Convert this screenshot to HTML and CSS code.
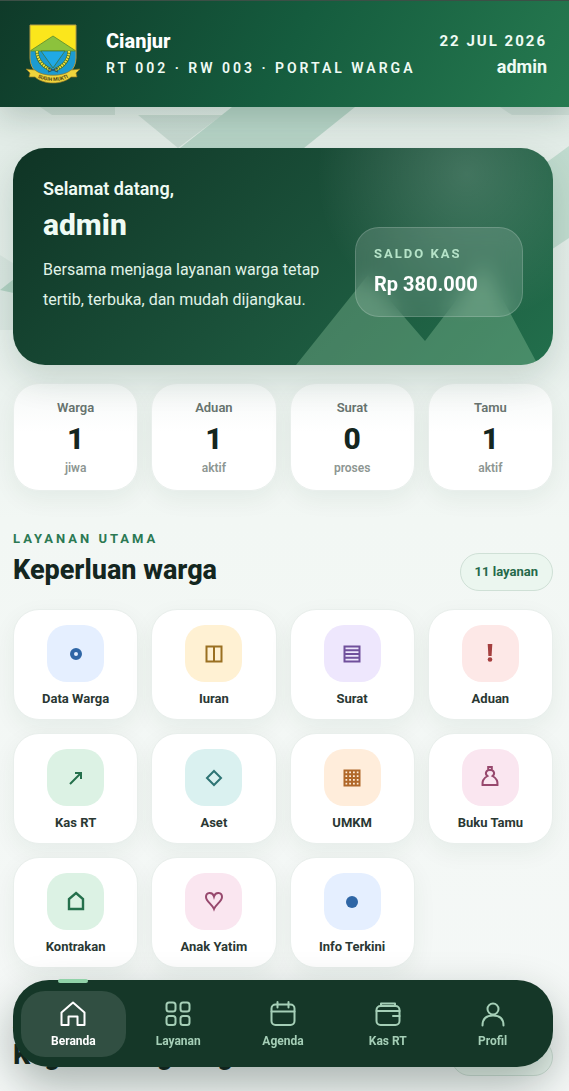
FILE: index.html
```html
<!DOCTYPE html>
<html lang="id">
<head>
    <meta charset="UTF-8">
    <meta name="viewport" content="width=device-width, initial-scale=1">
    <title>Portal Warga - Cianjur</title>
    <link rel="stylesheet" href="styles.css">
</head>
<body>

<svg class="backdrop" viewBox="0 0 569 400" preserveAspectRatio="none" aria-hidden="true">
    <path d="M138 115H222L178 148Z" fill="#0f5a3a" opacity=".12"/>
    <path d="M0 290L232 107H355L100 312Z" fill="#0f7a4a" opacity=".2"/>
    <path d="M569 146L400 270V350L569 238Z" fill="#0f7a4a" opacity=".16"/>
    <path d="M0 255L40 280V330H0Z" fill="#0f5a3a" opacity=".05"/>
    <path d="M40 107H115V115H52Z" fill="#0f5a3a" opacity=".1"/>
    <path d="M500 107H569V115H512Z" fill="#0f5a3a" opacity=".08"/>
</svg>

<header class="topbar">
    <svg class="logo" viewBox="0 0 56 60" role="img" aria-label="Lambang Cianjur">
        <path d="M5 1H51V34C51 46 41 54 28 57C15 54 5 46 5 34Z" fill="#1c9bd0"/>
        <path d="M5 1H51V27H5Z" fill="#fbe61c"/>
        <path d="M28 12L51 27H5Z" fill="#8cc23c" stroke="#5d8a2c" stroke-width=".8"/>
        <path d="M16 27L28 43L40 27Z" fill="#20a9e6"/>
        <path d="M16 27H40L28 44Z" fill="none" stroke="#46702b" stroke-width=".7"/>
        <path d="M12 27C12 35 17 42 26 46M44 27C44 35 39 42 30 46" fill="none" stroke="#3f6b2b" stroke-width="3.6"/>
        <path d="M12 27C12 35 17 42 26 46M44 27C44 35 39 42 30 46" fill="none" stroke="#f3e23a" stroke-width="2.4" stroke-dasharray="1.8 .8"/>
        <path d="M23 48L33 44M23 44L33 48" stroke="#24506a" stroke-width="1.2"/>
        <path d="M5 1H51V34C51 46 41 54 28 57C15 54 5 46 5 34Z" fill="none" stroke="#b49b45"/>
        <path d="M1 45L10 46C17 53 39 53 46 46L55 45L51 49L52 53L46 53C37 61 19 61 10 53L4 53L5 49Z" fill="#f0d43c" stroke="#8d7425" stroke-width=".7"/>
        <path id="pita" d="M9 51C18 59 38 59 47 51" fill="none"/>
        <text class="logo-text"><textPath href="#pita" startOffset="50%" text-anchor="middle">SUGIH MUKTI</textPath></text>
    </svg>
    <div class="brand">
        <strong>Cianjur</strong>
        <span>RT 002 · RW 003 · PORTAL WARGA</span>
    </div>
    <div class="session">
        <span>22 JUL 2026</span>
        <strong>admin</strong>
    </div>
</header>

<main class="page">
    <section class="hero">
        <svg class="hero-hills" viewBox="0 0 242 101" aria-hidden="true">
            <path d="M0 101L72 11L129 77L188 0L242 101Z" fill="#8ec49f" opacity=".36"/>
        </svg>
        <div class="hero-text">
            <p class="greeting">Selamat datang,</p>
            <h1>admin</h1>
            <p class="intro">Bersama menjaga layanan warga tetap tertib, terbuka, dan mudah dijangkau.</p>
        </div>
        <div class="balance">
            <span>SALDO KAS</span>
            <strong>Rp 380.000</strong>
        </div>
    </section>

    <section class="stats">
        <div class="stat"><span>Warga</span><strong>1</strong><small>jiwa</small></div>
        <div class="stat"><span>Aduan</span><strong>1</strong><small>aktif</small></div>
        <div class="stat"><span>Surat</span><strong>0</strong><small>proses</small></div>
        <div class="stat"><span>Tamu</span><strong>1</strong><small>aktif</small></div>
    </section>

    <section class="section">
        <div class="section-head">
            <div>
                <p class="eyebrow">LAYANAN UTAMA</p>
                <h2>Keperluan warga</h2>
            </div>
            <span class="pill">11 layanan</span>
        </div>

        <div class="services">
            <a class="service" href="#data-warga">
                <span class="tile blue"><svg viewBox="0 0 24 24"><circle cx="12" cy="12" r="4" stroke-width="4"/></svg></span>
                Data Warga
            </a>
            <a class="service" href="#iuran">
                <span class="tile yellow"><svg viewBox="0 0 24 24"><path d="M4.500 4.500H19.500V19.500H4.500ZM12 4.500V19.500"/></svg></span>
                Iuran
            </a>
            <a class="service" href="#surat">
                <span class="tile purple"><svg viewBox="0 0 24 24"><path d="M4.500 4.500H19.500V19.500H4.500ZM4.500 8.200H19.500M4.500 12H19.500M4.500 15.800H19.500"/></svg></span>
                Surat
            </a>
            <a class="service" href="#aduan">
                <span class="tile red"><svg viewBox="0 0 24 24"><path class="solid" d="M9.700 2H14.300L13.600 14H10.400Z"/><circle class="solid" cx="12" cy="17.500" r="2.300"/></svg></span>
                Aduan
            </a>
            <a class="service" href="#kas">
                <span class="tile green"><svg viewBox="0 0 24 24"><path d="M6 18L17 7M11 7H17V13"/></svg></span>
                Kas RT
            </a>
            <a class="service" href="#aset">
                <span class="tile teal"><svg viewBox="0 0 24 24"><path d="M12 5L19 12L12 19L5 12Z"/></svg></span>
                Aset
            </a>
            <a class="service" href="#umkm">
                <span class="tile orange"><svg viewBox="0 0 24 24"><path d="M4.500 4.500H19.500V19.500H4.500ZM8.200 4.500V19.500M12 4.500V19.500M15.800 4.500V19.500M4.500 8.200H19.500M4.500 12H19.500M4.500 15.800H19.500"/></svg></span>
                UMKM
            </a>
            <a class="service" href="#buku-tamu">
                <span class="tile pink"><svg viewBox="0 0 24 24"><path d="M10.200 4V1H13.800V4M9.500 10C6.500 7.500 8 4 12 4C16 4 17.500 7.500 14.500 10C18 12 20 15 19.500 19H4.500C4 15 6 12 9.500 10Z"/></svg></span>
                Buku Tamu
            </a>
            <a class="service" href="#kontrakan">
                <span class="tile green"><svg viewBox="0 0 24 24"><path d="M12 3L19 9V19H5V9Z" stroke-width="2.400"/></svg></span>
                Kontrakan
            </a>
            <a class="service" href="#anak-yatim">
                <span class="tile pink"><svg viewBox="0 0 24 24"><path d="M12 19C10 14 4 11.500 4 7C4 2 10.500 1.500 12 6.500C13.500 1.500 20 2 20 7C20 11.500 14 14 12 19Z"/></svg></span>
                Anak Yatim
            </a>
            <a class="service" href="#info">
                <span class="tile blue"><svg viewBox="0 0 24 24"><circle class="solid" cx="12" cy="12" r="6"/></svg></span>
                Info Terkini
            </a>
        </div>
    </section>

    <section class="section">
        <div class="section-head">
            <div>
                <p class="eyebrow">AGENDA</p>
                <h2>Kegiatan lingkungan</h2>
            </div>
            <a class="pill" href="#agenda">Lihat semua</a>
        </div>
    </section>
</main>

<nav class="bottom-nav">
    <a class="active" href="#beranda">
        <svg viewBox="0 0 26 26"><path d="M1.500 11.500L13 1.500L24.500 11.500V24H17.500V15.500H8.500V24H1.500Z"/></svg>
        Beranda
    </a>
    <a href="#layanan">
        <svg viewBox="0 0 26 26"><rect x="1.500" y="1.500" width="9" height="9" rx="2.500"/><rect x="15.500" y="1.500" width="9" height="9" rx="2.500"/><rect x="1.500" y="15" width="9" height="9" rx="2.500"/><rect x="15.500" y="15" width="9" height="9" rx="2.500"/></svg>
        Layanan
    </a>
    <a href="#agenda">
        <svg viewBox="0 0 26 26"><rect x="1.500" y="3.500" width="23" height="20.500" rx="4"/><path d="M1.500 10.500H24.500M7.500 1V6.500M18.500 1V6.500"/></svg>
        Agenda
    </a>
    <a href="#kas">
        <svg viewBox="0 0 26 26"><rect x="1.500" y="5" width="23" height="19" rx="4"/><path d="M6 4.500V2.500H20V4.500M1.500 10H24.500M24.500 15H18"/></svg>
        Kas RT
    </a>
    <a href="#profil">
        <svg viewBox="0 0 26 26"><circle cx="13" cy="8" r="5.500"/><path d="M2.500 24.500C2.500 18 6.500 14.500 13 14.500C19.500 14.500 23.500 18 23.500 24.500"/></svg>
        Profil
    </a>
</nav>

</body>
</html>
```
FILE: styles.css
```css
* {
    box-sizing: border-box;
}

body {
    margin: 0;
    min-height: 100vh;
    font-family: Roboto, sans-serif;
    color: #14261f;
    background: linear-gradient(180deg, #dfeae4 0, #e5eeea 280px, #f2f7f4 520px, #f5f8f7 100%);
    position: relative;
}

h1, h2, p {
    margin: 0;
}

a {
    color: inherit;
    text-decoration: none;
}

.backdrop {
    position: absolute;
    top: 0;
    left: 0;
    width: 100%;
    height: 400px;
    z-index: -1;
}

/* header */
.topbar {
    position: sticky;
    top: 0;
    z-index: 5;
    display: flex;
    align-items: center;
    padding: 23px 22px 23px 25px;
    border-top: 1px solid #3c4f46;
    background: linear-gradient(120deg, #0f3a29 0%, #155c3e 50%, #267a50 100%);
    box-shadow: 0 10px 30px rgba(15, 50, 35, 0.2);
    color: #effbf4;
}

.logo {
    width: 56px;
    height: 60px;
    margin-right: 25px;
}

.logo-text {
    font-size: 5px;
    font-weight: 700;
    fill: #4e4415;
}

.brand, .session {
    display: flex;
    flex-direction: column;
    gap: 2px;
    white-space: nowrap;
}

.brand strong {
    font-size: 20px;
    line-height: 26px;
    font-weight: 800;
    color: white;
}

.brand span {
    font-size: 14px;
    line-height: 24px;
    font-weight: 600;
    letter-spacing: 3px;
}

.session {
    margin-left: auto;
    gap: 0;
    text-align: right;
}

.session span {
    font-size: 15px;
    line-height: 26px;
    font-weight: 700;
    letter-spacing: 2px;
}

.session strong {
    font-size: 18px;
    line-height: 26px;
}

/* content */
.page {
    padding: 41px 16px 0 13px;
}

.hero {
    position: relative;
    overflow: hidden;
    display: flex;
    justify-content: space-between;
    align-items: flex-end;
    gap: 20px;
    padding: 29px 30px 48px;
    border-radius: 32px;
    background:
        radial-gradient(circle at 84% 12%, rgba(255, 255, 255, 0.17), rgba(255, 255, 255, 0) 150px),
        linear-gradient(135deg, #0f3425 0%, #1a5039 50%, #226f4c 100%);
    box-shadow: 0 14px 34px rgba(15, 60, 40, 0.16);
    color: #effbf4;
}

.hero-hills {
    position: absolute;
    right: 15px;
    bottom: 0;
    width: 242px;
    height: 101px;
}

.hero-text {
    flex: 1;
}

.greeting {
    font-size: 18px;
    line-height: 24px;
    font-weight: 600;
}

.hero h1 {
    margin: 6px 0 12px;
    font-size: 30px;
    line-height: 36px;
    font-weight: 800;
}

.intro {
    padding-bottom: 2px;
    font-size: 16px;
    line-height: 30px;
    color: #e0f3e8;
}

.balance {
    position: relative;
    display: flex;
    flex-direction: column;
    gap: 6px;
    width: 168px;
    height: 90px;
    padding: 16px 18px;
    border: 1px solid rgba(255, 255, 255, 0.17);
    border-radius: 24px;
    background: rgba(255, 255, 255, 0.14);
    backdrop-filter: blur(10px);
}

.balance span {
    font-size: 13px;
    line-height: 20px;
    font-weight: 700;
    letter-spacing: 2px;
    color: #b5e3c8;
}

.balance strong {
    font-size: 20px;
    line-height: 28px;
    color: white;
}

.stats, .services {
    display: grid;
    grid-template-columns: repeat(4, 1fr);
    gap: 13px;
}

.stats {
    margin-top: 18px;
}

.stat, .service {
    display: flex;
    flex-direction: column;
    align-items: center;
    border: 1px solid #e9efec;
    border-radius: 26px;
    background: white;
    box-shadow: 0 8px 24px rgba(20, 60, 42, 0.06);
}

.stat {
    padding: 14px 8px;
    background: linear-gradient(180deg, #f5f8f7, #ffffff 45%);
}

.stat span {
    font-size: 13px;
    line-height: 20px;
    font-weight: 600;
    color: #67736e;
}

.stat strong {
    font-size: 30px;
    line-height: 42px;
    font-weight: 800;
}

.stat small {
    font-size: 12px;
    line-height: 16px;
    font-weight: 600;
    color: #8d9692;
}

.section {
    margin-top: 38px;
}

.section-head {
    display: flex;
    justify-content: space-between;
    align-items: flex-end;
    margin-bottom: 18px;
}

.eyebrow {
    font-size: 13px;
    line-height: 20px;
    font-weight: 700;
    letter-spacing: 3px;
    color: #2b7953;
}

.section-head h2 {
    font-size: 27px;
    line-height: 42px;
    font-weight: 800;
}

.pill {
    padding: 8px 14px;
    border: 1px solid #cfe0d6;
    border-radius: 19px;
    background: #ebf6ef;
    font-size: 13px;
    line-height: 20px;
    font-weight: 700;
    color: #25694a;
}

.services {
    margin-bottom: 46px;
}

.service {
    gap: 7px;
    padding: 15px 4px 10px;
    font-size: 13px;
    line-height: 20px;
    font-weight: 700;
    color: #2a3833;
}

.tile {
    display: grid;
    place-items: center;
    width: 57px;
    height: 57px;
    border-radius: 20px;
}

.tile svg {
    width: 24px;
    height: 24px;
    fill: none;
    stroke: currentColor;
    stroke-width: 2;
}

.tile .solid {
    fill: currentColor;
    stroke: none;
}

.blue { background: #e5efff; color: #2f66a6; }
.yellow { background: #fff1d3; color: #9a7022; }
.purple { background: #eee7fd; color: #70509c; }
.red { background: #fde8e7; color: #a53f3f; }
.green { background: #dcf2e4; color: #25704c; }
.teal { background: #daf1f0; color: #2e7474; }
.orange { background: #ffeddb; color: #b0682a; }
.pink { background: #fae6f0; color: #97486d; }

/* bottom navigation */
.bottom-nav {
    position: fixed;
    left: 13px;
    right: 16px;
    bottom: 24px;
    z-index: 10;
    display: grid;
    grid-template-columns: repeat(5, 1fr);
    padding: 11px 8px 10px;
    border-radius: 36px;
    background: #153728;
    box-shadow: 0 18px 44px rgba(10, 35, 25, 0.32);
}

.bottom-nav a {
    position: relative;
    display: flex;
    flex-direction: column;
    align-items: center;
    gap: 5px;
    padding: 10px 0 7px;
    border-radius: 24px;
    font-size: 12px;
    line-height: 18px;
    font-weight: 700;
    color: #a5cfb7;
}

.bottom-nav .active {
    background: #314f42;
    color: white;
}

.bottom-nav .active::before {
    content: "";
    position: absolute;
    top: -12px;
    width: 30px;
    height: 4px;
    border-radius: 2px;
    background: #91d3a9;
}

.bottom-nav svg {
    width: 26px;
    height: 26px;
    fill: none;
    stroke: currentColor;
    stroke-width: 2;
    stroke-linecap: round;
    stroke-linejoin: round;
}
```
